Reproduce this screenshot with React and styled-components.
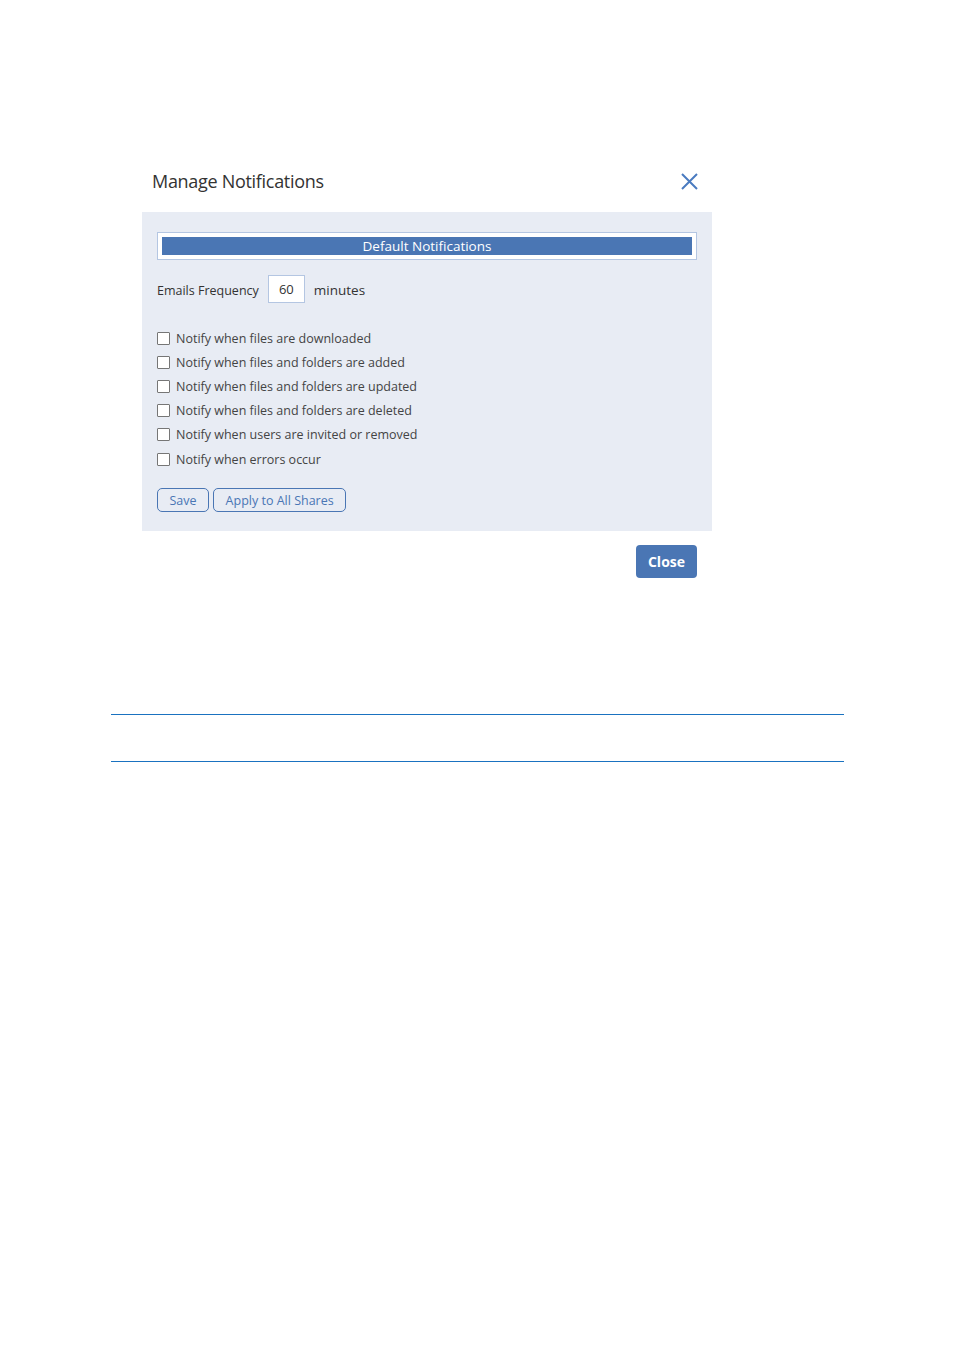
import { styled, createGlobalStyle } from "styled-components";

const Global = createGlobalStyle`
    body {
        margin: 0;
        background: #fff;
        font-family: "Open Sans", "Noto Sans", sans-serif;
        color: #333;
    }
`;

const options = [
    "Notify when files are downloaded",
    "Notify when files and folders are added",
    "Notify when files and folders are updated",
    "Notify when files and folders are deleted",
    "Notify when users are invited or removed",
    "Notify when errors occur",
];

export default function App(){

    return (
        <Page>
            <Global/>
            <Dialog>
                <Header>
                    <Title>Manage Notifications</Title>
                    <CloseIcon aria-label="close">
                        <svg width="17" height="17" viewBox="0 0 17 17">
                            <path d="M1 1 L16 16 M16 1 L1 16" stroke="#4a7bc0" strokeWidth="2" fill="none"/>
                        </svg>
                    </CloseIcon>
                </Header>
                <Panel>
                    <Banner>
                        <BannerBar>Default Notifications</BannerBar>
                    </Banner>
                    <FrequencyRow>
                        <Label>Emails Frequency</Label>
                        <NumberBox defaultValue="60"/>
                        <Unit>minutes</Unit>
                    </FrequencyRow>
                    <List>
                        {options.map((o) => (
                            <Option key={o}>
                                <Box/>
                                <span>{o}</span>
                            </Option>
                        ))}
                    </List>
                    <Actions>
                        <OutlineButton>Save</OutlineButton>
                        <OutlineButton>Apply to All Shares</OutlineButton>
                    </Actions>
                </Panel>
                <Footer>
                    <PrimaryButton>Close</PrimaryButton>
                </Footer>
            </Dialog>
            <Rules/>
        </Page>
    );
}

const Page = styled.div`
    width: 955px;
    padding-top: 166px;
`;

const Dialog = styled.div`
    width: 570px;
    margin-left: 142px;
`;

const Header = styled.div`
    height: 30px;
    display: flex;
    align-items: center;
    justify-content: space-between;
    padding: 0 14px 16px 10px;
`;

const Title = styled.h2`
    margin: 0;
    font-size: 18px;
    font-weight: 400;
    color: #333;
    letter-spacing: -0.3px;
`;

const CloseIcon = styled.div`
    width: 17px;
    height: 17px;
    display: flex;
`;

const Panel = styled.div`
    background: #e8ecf4;
    padding: 20px 15px 19px 15px;
`;

const Banner = styled.div`
    background: #fff;
    border: 1px solid #b4c6e2;
    padding: 4px;
`;

const BannerBar = styled.div`
    height: 18px;
    background: #4a76b4;
    color: #fff;
    font-size: 13.5px;
    line-height: 18px;
    text-align: center;
`;

const FrequencyRow = styled.div`
    display: flex;
    align-items: center;
    margin-top: 15px;
    height: 28px;
`;

const Label = styled.span`
    font-size: 12.5px;
    color: #333;
    margin-top: 2px;
`;

const NumberBox = styled.input`
    width: 37px;
    height: 28px;
    box-sizing: border-box;
    margin-left: 9px;
    border: 1px solid #b4c6e2;
    background: #fff;
    text-align: center;
    font-family: inherit;
    font-size: 13px;
    color: #333;
    padding: 0;
    outline: none;
`;

const Unit = styled.span`
    margin-left: 9px;
    font-size: 13.5px;
    color: #333;
    margin-top: 1px;
`;

const List = styled.div`
    margin-top: 23px;
    display: flex;
    flex-direction: column;
`;

const Option = styled.label`
    display: flex;
    align-items: center;
    height: 24.2px;
    font-size: 12.5px;
    color: #444;
`;

const Box = styled.span`
    width: 11px;
    height: 11px;
    border: 1px solid #767676;
    border-radius: 1px;
    background: #fff;
    margin-right: 6px;
    flex-shrink: 0;
`;

const Actions = styled.div`
    display: flex;
    gap: 4px;
    margin-top: 17px;
`;

const OutlineButton = styled.button`
    height: 24px;
    padding: 0 11.5px;
    border: 1px solid #4a76b4;
    border-radius: 5px;
    background: transparent;
    color: #4a76b4;
    font-family: inherit;
    font-size: 12.5px;
`;

const Footer = styled.div`
    display: flex;
    justify-content: flex-end;
    padding: 14px 15px 0 0;
`;

const PrimaryButton = styled.button`
    width: 61px;
    height: 33px;
    border: none;
    border-radius: 4px;
    background: #4a76b4;
    color: #fff;
    font-family: inherit;
    font-size: 14px;
    font-weight: 700;
`;

const Rules = styled.div`
    width: 733px;
    height: 46px;
    margin: 136px 0 0 111px;
    border-top: 1px solid #1a72c0;
    border-bottom: 1px solid #1a72c0;
`;
